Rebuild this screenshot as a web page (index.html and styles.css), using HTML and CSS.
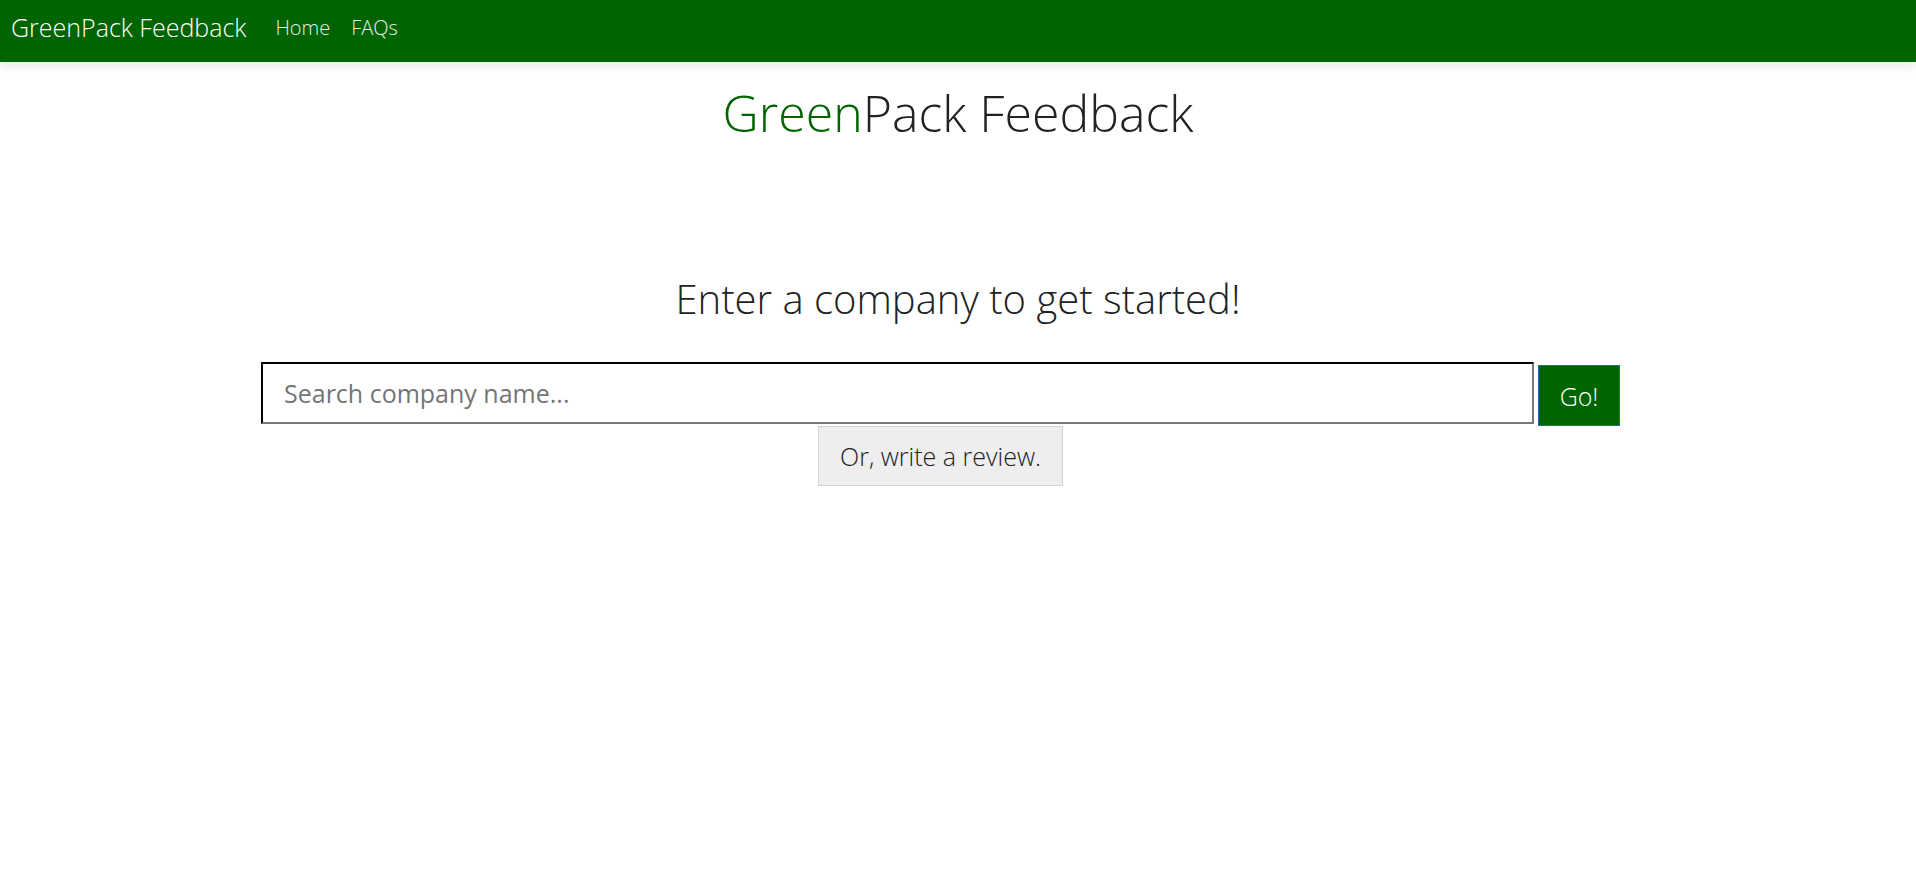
FILE: index.html
```html
<!DOCTYPE html>
<html lang="en">
<head>
<meta charset="utf-8">
<title>GreenPack Feedback</title>
<link rel="stylesheet" href="styles.css">
</head>
<body>
<nav class="navbar">
  <a class="brand" href="#">GreenPack Feedback</a>
  <a class="nav-link" href="#">Home</a>
  <a class="nav-link" href="#">FAQs</a>
</nav>
<main class="main">
  <h1 class="title"><span class="green">Green</span>Pack Feedback</h1>
  <h2 class="lead">Enter a company to get started!</h2>
  <div class="search-area">
    <form class="search-row">
      <input class="search-input" type="text" placeholder="Search company name...">
      <button class="go-btn" type="button">Go!</button>
    </form>
    <div class="review-row">
      <button class="review-btn" type="button">Or, write a review.</button>
    </div>
  </div>
</main>
</body>
</html>
```
FILE: styles.css
```css
html, body {
  margin: 0;
  padding: 0;
  background: #ffffff;
}
body {
  font-family: "Open Sans", "Liberation Sans", sans-serif;
  font-weight: 300;
  color: #212529;
}
.navbar {
  height: 62px;
  background: #006400;
  display: flex;
  align-items: center;
  padding-left: 11px;
  box-shadow: 0 4px 10px rgba(0, 0, 0, 0.1);
  position: relative;
}
.brand {
  font-size: 25px;
  color: #ffffff;
  text-decoration: none;
  margin-right: 29px;
  line-height: 1;
  padding-bottom: 8px;
}
.nav-link {
  font-size: 20px;
  color: #e8f0e8;
  text-decoration: none;
  margin-right: 21px;
  line-height: 1;
  padding-bottom: 6px;
}
.main {
  display: flex;
  flex-direction: column;
  align-items: center;
}
.title {
  margin: 26px 0 0;
  font-size: 50px;
  font-weight: 300;
  line-height: 1;
  color: #222222;
}
.green {
  color: #006400;
}
.lead {
  margin: 141px 0 0;
  font-size: 40px;
  font-weight: 300;
  line-height: 1;
  color: #222222;
}
.search-area {
  align-self: flex-start;
  margin: 43px 0 0 261px;
  width: 1359px;
  display: flex;
  flex-direction: column;
}
.search-row {
  display: flex;
  align-items: flex-start;
  margin: 0;
}
.search-input {
  box-sizing: border-box;
  width: 1273px;
  height: 62px;
  border: 2px inset #767676;
  border-top-color: #222;
  border-left-color: #222;
  border-bottom-color: #777;
  border-right-color: #777;
  padding: 0 21px;
  font-family: "Open Sans", "Liberation Sans", sans-serif;
  font-weight: 400;
  font-size: 25px;
  color: #333;
  outline: none;
}
.search-input::placeholder {
  color: #757575;
}
.go-btn {
  box-sizing: border-box;
  width: 82px;
  height: 61px;
  margin: 3px 0 0 4px;
  background: #006400;
  border: 1px solid #1f6f8b;
  color: #ffffff;
  font-family: "Open Sans", "Liberation Sans", sans-serif;
  font-weight: 300;
  font-size: 25px;
  padding: 0;
}
.review-row {
  display: flex;
  justify-content: center;
}
.review-btn {
  box-sizing: border-box;
  height: 60px;
  padding: 0 21px;
  background: #eeeeee;
  border: 1px solid #d4d4d4;
  color: #222222;
  font-family: "Open Sans", "Liberation Sans", sans-serif;
  font-weight: 300;
  font-size: 25px;
}
```
